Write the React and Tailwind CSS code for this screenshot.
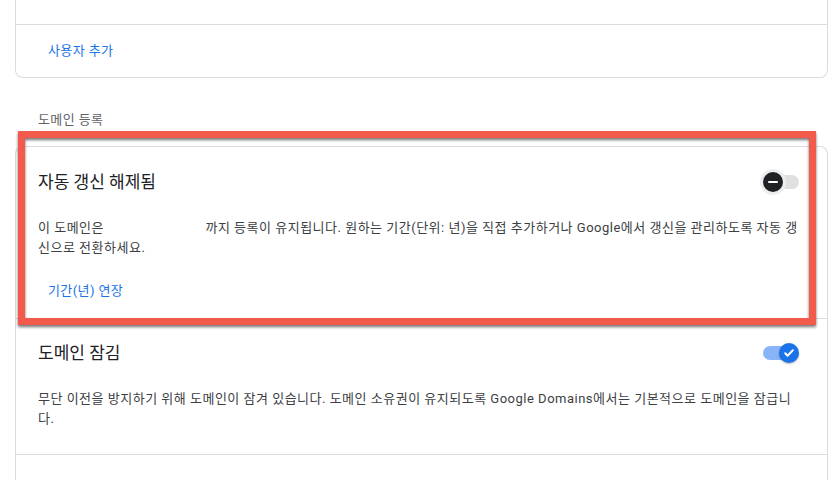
import React from 'react';

// --- Toggle switches ---

const ToggleOff = () => (
  <div className="relative w-[36px] h-[20px] shrink-0">
    <div className="absolute left-[10px] right-0 top-[3px] h-[14px] rounded-full bg-[#e0e0e0]"></div>
    <div className="absolute -left-[3px] -top-[3px] w-[26px] h-[26px] rounded-full bg-[#eceef0]"></div>
    <div className="absolute left-0 top-0 w-[20px] h-[20px] rounded-full bg-[#202124] flex items-center justify-center">
      <div className="w-[10px] h-[2px] rounded-sm bg-white"></div>
    </div>
  </div>
);

const ToggleOn = () => (
  <div className="relative w-[36px] h-[20px] shrink-0">
    <div className="absolute left-0 right-[10px] top-[3px] h-[14px] rounded-full bg-[#8ab4f8]"></div>
    <div className="absolute right-0 top-0 w-[20px] h-[20px] rounded-full bg-[#1a73e8] flex items-center justify-center shadow-[0_1px_2px_rgba(0,0,0,0.3)]">
      <svg className="w-[14px] h-[14px]" viewBox="0 0 14 14" fill="none" stroke="white" strokeWidth="2" strokeLinecap="round" strokeLinejoin="round">
        <path d="M3.2 7.3l2.4 2.4 5.2-5.4" />
      </svg>
    </div>
  </div>
);

const TextButton = ({ children }) => (
  <button className="h-9 px-[10px] rounded text-[13px] tracking-[0.4px] text-[#1a73e8]">{children}</button>
);

const SettingRow = ({ title, toggle, children, action, top, bottom }) => (
  <div className={`border-b border-[#dadce0] pl-[22px] pr-[28px] ${top} ${bottom}`}>
    <div className="flex items-center justify-between h-6">
      <h3 className="text-[17px] leading-6 text-[#202124]">{title}</h3>
      {toggle}
    </div>
    <p className="mt-6 -mr-[3px] text-[13px] leading-5 tracking-[0.5px] text-[#3c4043]">{children}</p>
    {action && <div className="mt-[15px]">{action}</div>}
  </div>
);

// --- Main page ---
export default function App() {
  return (
    <div className="relative w-[835px] h-[480px] overflow-hidden bg-white font-['Roboto','Noto_Sans_CJK_KR',sans-serif]">
      <div className="ml-[15px] w-[813px]">
        {/* users card (cut off at top) */}
        <div className="border-x border-b border-[#dadce0] rounded-b-lg">
          <div className="h-[25px] border-b border-[#dadce0]"></div>
          <div className="pl-[22px] py-2">
            <TextButton>사용자 추가</TextButton>
          </div>
        </div>

        <div className="mt-8 mb-4 pl-[23px] text-[13px] leading-5 tracking-[0.4px] text-[#5f6368]">도메인 등록</div>

        {/* registration card */}
        <div className="border-x border-t border-[#dadce0] rounded-t-lg h-[400px]">
          <SettingRow
            title="자동 갱신 해제됨"
            toggle={<ToggleOff />}
            top="pt-[23px]"
            bottom="pb-[9px]"
            action={<TextButton>기간(년) 연장</TextButton>}
          >
            이 도메인은 <span className="inline-block w-[94px]"></span> 까지 등록이 유지됩니다. 원하는 기간(단위: 년)을 직접 추가하거나 Google에서 갱신을 관리하도록 자동 갱신으로 전환하세요.
          </SettingRow>
          <SettingRow
            title="도메인 잠김"
            toggle={<ToggleOn />}
            top="pt-[22px]"
            bottom="pb-[25px]"
          >
            무단 이전을 방지하기 위해 도메인이 잠겨 있습니다. 도메인 소유권이 유지되도록 Google Domains에서는 기본적으로 도메인을 잠급니다.
          </SettingRow>
        </div>
      </div>

      {/* highlight frame */}
      <div className="absolute left-[18px] top-[131px] w-[798px] h-[194px] border-[7px] border-[#f25a4c] drop-shadow-[0_2px_1.5px_rgba(0,0,0,0.55)]"></div>
    </div>
  );
}
